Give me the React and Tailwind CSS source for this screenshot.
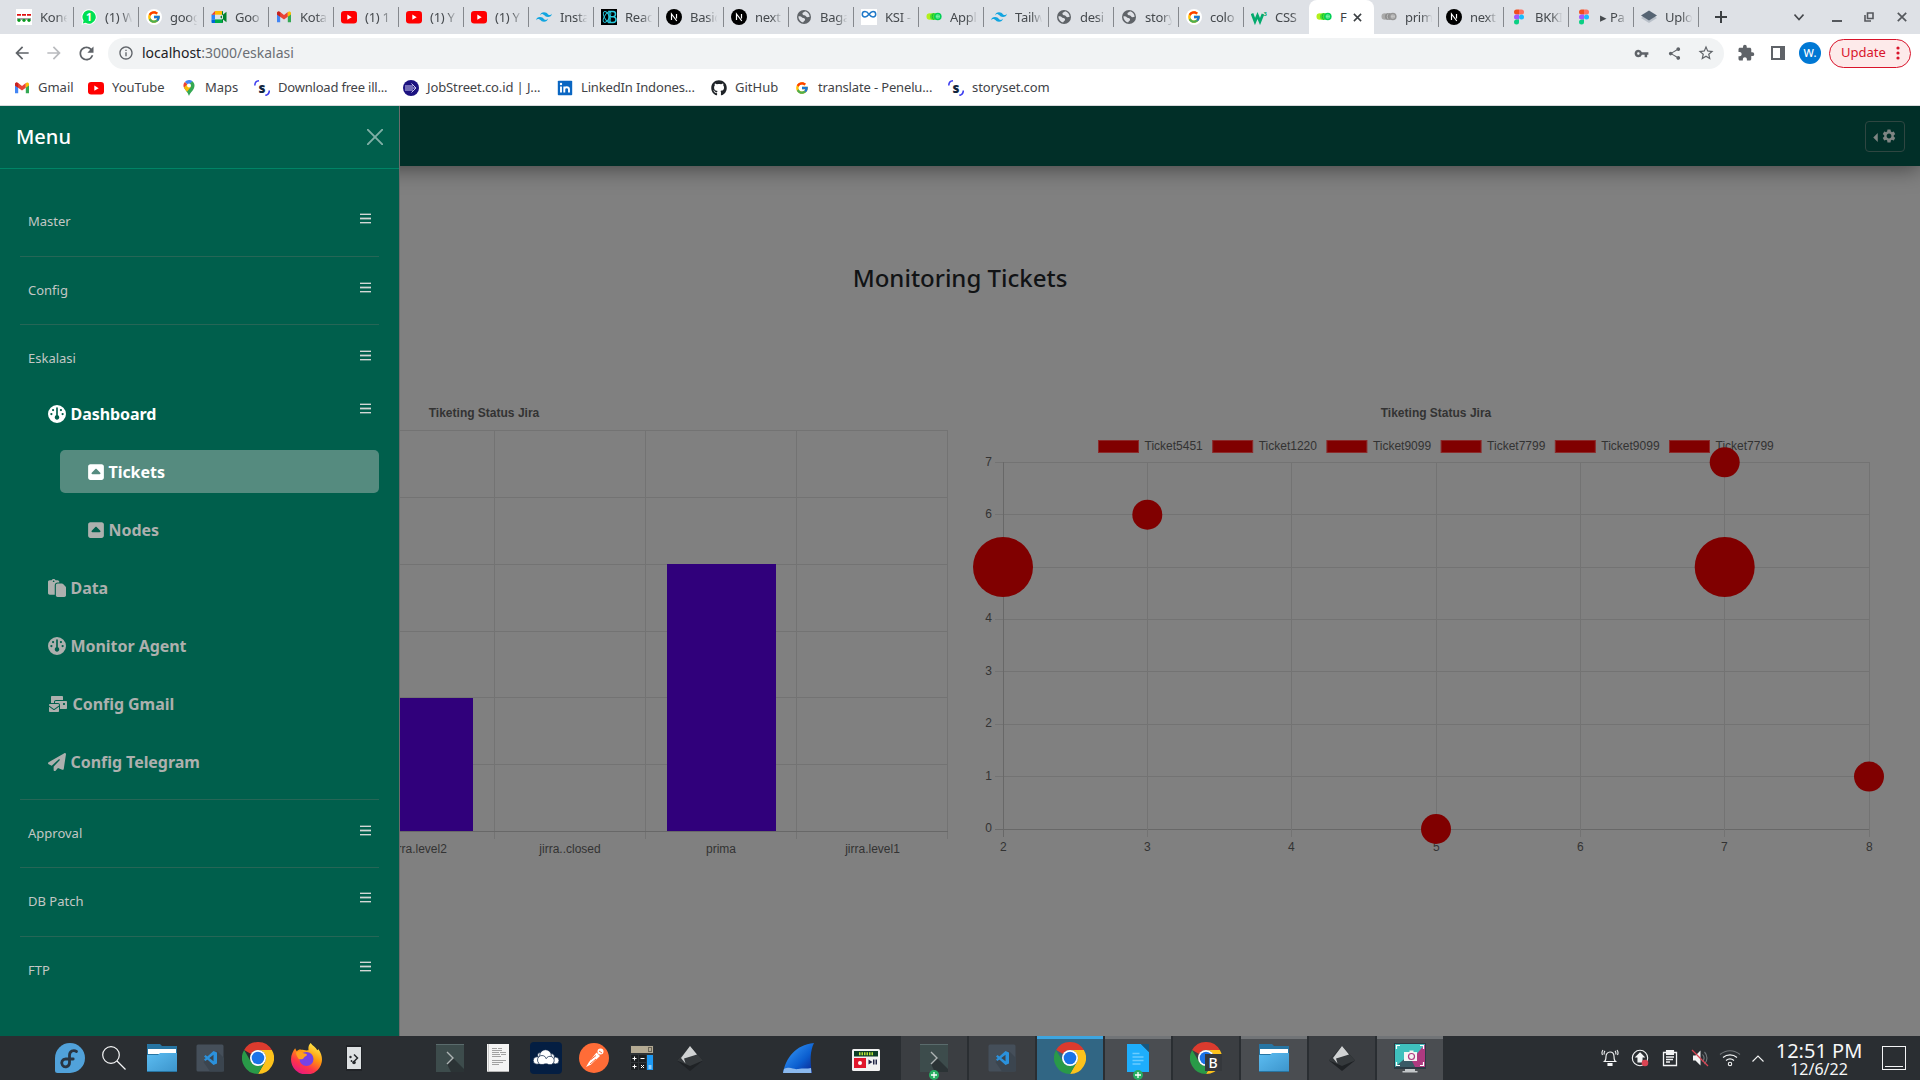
import React from "react";
import { FaGauge, FaSquareCaretUp, FaPaste, FaPaperPlane, FaEnvelopesBulk } from "react-icons/fa6";
import { FaGithub } from "react-icons/fa";
import { MdVpnKey, MdShare, MdStarBorder, MdExtension, MdRefresh, MdArrowBack, MdArrowForward, MdInfoOutline, MdSettings } from "react-icons/md";
import { SiTailwindcss } from "react-icons/si";
import { FcGoogle } from "react-icons/fc";

/* ---------- favicons ---------- */

const YouTube = () => (
  <svg viewBox="0 0 16 16" className="size-4">
    <rect x="0" y="2" width="16" height="12.5" rx="3.2" fill="#f00" />
    <path d="M6.3 5.6v5.2l4.4-2.6z" fill="#fff" />
  </svg>
);

const Gmail = () => (
  <svg viewBox="0 0 16 16" className="size-4">
    <path d="M1 4v9.2h3.2V7.6z" fill="#4285f4" />
    <path d="M15 4v9.2h-3.2V7.6z" fill="#34a853" />
    <path d="M1 4.2C1 2.4 3 2 4.2 3L8 5.9 11.800 3v4.700L8 10.500 1 5.400z" fill="#ea4335" />
    <path d="M11.800 3C13 2 15 2.400 15 4.200v1.300l-3.200 2.300z" fill="#fbbc04" />
    <path d="M1 4.200v1.300l3.200 2.300V3C3 2 1 2.400 1 4.200z" fill="#c5221f" />
  </svg>
);

const Google = () => (
  <span className="flex size-4 items-center justify-center rounded-full bg-white">
    <FcGoogle className="size-3.5" />
  </span>
);

const Globe = () => (
  <svg viewBox="0 0 16 16" className="size-4">
    <circle cx="8" cy="8" r="7" fill="#5f6368" />
    <path d="M9 2.200c-1 1.300-3 1-2.400 3 .5 1.400 3 .6 3.600 2.400.3 1 2.300.6 3.500.2-.2-2.700-2-4.900-4.700-5.600zM2.300 7.500c.2 3 2 5.200 4.800 6 .3-1.400 2-1.500 2-3C9 8.800 6.500 9.300 5.600 8 5 7.200 3.500 7.300 2.300 7.500z" fill="#dfe1e6" />
  </svg>
);

const Next = () => (
  <svg viewBox="0 0 16 16" className="size-4">
    <circle cx="8" cy="8" r="8" fill="#000" />
    <path d="M5.500 11V5l5.300 7M10.500 5v4.500" fill="none" stroke="#fff" strokeWidth="1.200" />
  </svg>
);

const Figma = () => (
  <svg viewBox="0 0 16 16" className="size-4">
    <path d="M8 .5H5.500a2.500 2.500 0 0 0 0 5H8z" fill="#f24e1e" />
    <path d="M8 .5h2.500a2.500 2.500 0 0 1 0 5H8z" fill="#ff7262" />
    <path d="M8 5.500H5.500a2.500 2.500 0 0 0 0 5H8z" fill="#a259ff" />
    <circle cx="10.500" cy="8" r="2.500" fill="#1abcfe" />
    <path d="M8 10.500H5.500A2.500 2.500 0 1 0 8 13z" fill="#0acf83" />
  </svg>
);

const Tailwind = () => <SiTailwindcss className="size-4 text-[#12a5e0]" />;

const Rings = ({ gray }) => (
  <svg viewBox="0 0 16 16" className="size-4">
    <circle cx="3.800" cy="7.500" r="3.300" fill={gray ? "#a9a9a9" : "#b2f01c"} />
    <circle cx="7.600" cy="7.500" r="3.600" fill={gray ? "#8c8c8c" : "#4fe02a"} />
    <circle cx="11.800" cy="7.500" r="3.800" fill={gray ? "#959595" : "#00cf55"} />
    <path d="M9.800 7.500h4M11.800 5.500v4M10.300 6h3v3h-3z" fill="none" stroke={gray ? "#cdcdcd" : "#8af5ae"} strokeWidth=".7" />
    <path d="M7.600 4.500a4 4 0 0 0 0 6" fill="none" stroke={gray ? "#c5c5c5" : "#0fae3c"} strokeWidth=".8" />
  </svg>
);

const Storyset = () => (
  <svg viewBox="0 0 16 16" className="size-4">
    <path d="M.8 5.500C.8 3 2.500 1 5 .8M15.300 10.500c0 2.500-1.500 4.500-4 4.900" fill="none" stroke="#3d3df0" strokeWidth="1.600" />
    <text x="8" y="12.500" textAnchor="middle" fontFamily="Noto Sans" fontWeight="900" fontSize="13.500" fill="#12263f">s</text>
  </svg>
);

const Kon = () => (
  <svg viewBox="0 0 16 16" className="size-4">
    <rect width="16" height="16" fill="#fff" />
    <path d="M1 5.800h4M6 5.800h4M11 5.800h4" stroke="#e01010" strokeWidth="1.800" />
    <path d="M1 10h14" stroke="#111" strokeWidth=".8" />
    <g fill="#0a9a20">
      <circle cx="3" cy="11.300" r="1.600" />
      <circle cx="8" cy="11.300" r="1.600" />
      <circle cx="13" cy="11.300" r="1.600" />
    </g>
  </svg>
);

const WhatsApp = () => (
  <svg viewBox="0 0 16 16" className="size-4">
    <path d="M8 .3a7.700 7.700 0 1 1-3.600 14.500L.5 15.800l1-3.800A7.700 7.700 0 0 1 8 .3z" fill="#fff" />
    <path d="M8 1.300a6.700 6.700 0 1 1-3.300 12.500l-2.900.8.8-2.900A6.700 6.700 0 0 1 8 1.300z" fill="#00e052" />
    <text x="8" y="12" textAnchor="middle" fontFamily="Noto Sans" fontWeight="700" fontSize="10.500" fill="#fff">1</text>
  </svg>
);

const Meet = () => (
  <svg viewBox="0 0 16 16" className="size-4">
    <path d="M.5 5.500v5H4v-5z" fill="#2684fc" />
    <path d="M.5 5.700 4 2v3.700z" fill="#ea4335" />
    <path d="M4 2h7v3.700H4z" fill="#ffba00" />
    <path d="M.5 10.400V13c0 .6.400 1 1 1H4v-3.600z" fill="#0066da" />
    <path d="M4 10.400h7V14H4z" fill="#00ac47" />
    <path d="M11 2v12c.6 0 1-.4 1-1V3c0-.6-.4-1-1-1zM9 8l6.500-5.300v10.600z" fill="#00832d" />
  </svg>
);

const ReactB = () => (
  <svg viewBox="0 0 16 16" className="size-4">
    <rect width="16" height="16" fill="#000" />
    <g fill="none" stroke="#28c9dd" strokeWidth=".9">
      <ellipse cx="6" cy="8" rx="6" ry="2.500" transform="rotate(60 6 8)" />
      <ellipse cx="6" cy="8" rx="6" ry="2.500" transform="rotate(-60 6 8)" />
      <path d="M8 2.500h4q2.500 0 2.500 2.500T12 7.700H8zm0 5.200h4.500q2.500.3 2.500 3t-3 2.800H8z" strokeWidth="1.500" />
    </g>
  </svg>
);

const Ksi = () => (
  <svg viewBox="0 0 16 16" className="size-4">
    <rect width="16" height="16" fill="#fff" />
    <path d="M8 5.300C6.500 3 5.500 2.500 4 2.500a2.700 2.700 0 0 0 0 5.400c1.500 0 2.500-.6 4-2.600s2.500-2.800 4-2.800a2.700 2.700 0 0 1 0 5.400c-1.500 0-2.500-.6-4-2.600z" fill="none" stroke="#1f78c8" strokeWidth="1.500" />
  </svg>
);

const W3 = () => (
  <svg viewBox="0 0 16 16" className="size-4">
    <path d="M1 4.500 4 12.500 6.500 6.500 9 12.500 12 5" fill="none" stroke="#04aa6d" strokeWidth="2.700" />
    <text x="12.500" y="6.500" fontFamily="Noto Sans" fontWeight="700" fontSize="6" fill="#04aa6d">3</text>
  </svg>
);

const Layers = () => (
  <svg viewBox="0 0 16 16" className="size-4">
    <path d="M0 9 8 4l8 5-8 5z" fill="#b9c0c9" />
    <path d="M0 6.500 8 1.500l8 5-8 5z" fill="#566473" />
  </svg>
);

const MapsPin = () => (
  <svg viewBox="0 0 16 16" className="size-4">
    <path d="M8 0a5.500 5.500 0 0 0-4.200 1.900L8 5.500 11.500 1.200A5.500 5.500 0 0 0 8 0z" fill="#4285f4" />
    <path d="M3.800 1.900A5.500 5.500 0 0 0 3.300 8.300L6.500 4.200z" fill="#ea4335" />
    <path d="M3.300 8.300 9.800 6.300 6.500 4.200 3 7.600z" fill="#fbbc04" />
    <path d="M3.300 8.300C4.500 10.500 6.500 12 8 16c1.500-4 5.500-6 5.500-10.500 0-1.700-.8-3.200-2-4.300z" fill="#34a853" />
    <path d="M3.300 8.300c.8 1.300 1.800 2.300 2.700 3.500l4-5-3.500-2.600z" fill="#fbbc04" />
    <circle cx="8" cy="5.500" r="2" fill="#fff" />
  </svg>
);

const JobStreet = () => (
  <svg viewBox="0 0 16 16" className="size-4">
    <circle cx="8" cy="8" r="8" fill="#1c1280" />
    <path d="M2 6h8M2 8h11M2 10h8M8.500 3.500 13 8l-4.500 4.500" fill="none" stroke="#c9c5ee" strokeWidth="1" />
  </svg>
);

const LinkedIn = () => (
  <svg viewBox="0 0 16 16" className="size-4">
    <rect x=".8" y=".8" width="14.400" height="14.400" rx=".8" fill="#0a66c2" />
    <path d="M4 6.500v6M7.300 12.500v-6M7.300 9.500c0-3 4.700-3 4.700 0v3" fill="none" stroke="#fff" strokeWidth="1.900" />
    <circle cx="4" cy="4" r="1.200" fill="#fff" />
  </svg>
);

const tabs = [
  [Kon, "Kone"], [WhatsApp, "(1) W"], [Google, "goog"], [Meet, "Goo"], [Gmail, "Kota"],
  [YouTube, "(1) 1"], [YouTube, "(1) Y"], [YouTube, "(1) Y"], [Tailwind, "Insta"], [ReactB, "Reac"],
  [Next, "Basic"], [Next, "next"], [Globe, "Baga"], [Ksi, "KSI -"], [Rings, "Appl"],
  [Tailwind, "Tailw"], [Globe, "desi"], [Globe, "story"], [Google, "colo"], [W3, "CSS"],
  [Rings, "F"], [() => <Rings gray />, "prim"], [Next, "next"], [Figma, "BKKI"], [Figma, "▸ Pa"], [Layers, "Uplo"],
];

const ACTIVE = 20;

function Tab({ icon: Icon, label, active, divider }) {
  if (active) {
    return (
      <div className="flex h-[34px] w-[65px] shrink-0 items-center rounded-t-lg bg-white pl-[7px]">
        <Icon />
        <span className="ml-2 w-[8px] overflow-hidden text-[#3c4043]">{label}</span>
        <svg viewBox="0 0 10 10" className="ml-[5px] size-[9px]">
          <path d="M1 1l8 8M9 1l-8 8" stroke="#3c4043" strokeWidth="1.700" />
        </svg>
      </div>
    );
  }
  return (
    <div className="flex h-[34px] w-[65px] shrink-0 items-center pl-[7px]">
      <Icon />
      <span className="ml-2 w-[28px] overflow-hidden whitespace-nowrap text-[#45494d] [mask-image:linear-gradient(to_right,black_58%,transparent_98%)]">{label}</span>
      <span className={divider ? "ml-auto h-5 w-px bg-[#85888d]" : "hidden"} />
    </div>
  );
}

function TabStrip() {
  return (
    <div className="flex h-[34px] shrink-0 items-center bg-[#dee1e6] pl-[9px] text-[13px] leading-[18px] tracking-[-0.25px]">
      {tabs.map(([icon, label], i) => (
        <Tab key={i} icon={icon} label={label} active={i === ACTIVE} divider={i !== ACTIVE - 1} />
      ))}
      <svg viewBox="0 0 12 12" className="ml-[16px] size-3">
        <path d="M6 0v12M0 6h12" stroke="#3c4043" strokeWidth="2" />
      </svg>
      <div className="ml-auto flex items-center pr-[13px]">
        <svg viewBox="0 0 10 10" className="mr-[28px] size-[10px]"><path d="M.5 2.500 5 7.500l4.500-5" fill="none" stroke="#44474b" strokeWidth="1.600" /></svg>
        <svg viewBox="0 0 10 10" className="mr-[22px] size-[10px]"><path d="M0 9h10" stroke="#55585d" strokeWidth="2" /></svg>
        <svg viewBox="0 0 10 10" className="mr-[23px] size-[10px]"><path d="M3.500 1h5.500v5.500H3.500zM1 3v6h6" fill="none" stroke="#55585d" strokeWidth="1.600" /></svg>
        <svg viewBox="0 0 10 10" className="size-[10px]"><path d="M.8.8l8.400 8.400M9.200.8.8 9.200" stroke="#55585d" strokeWidth="1.700" /></svg>
      </div>
    </div>
  );
}

function Toolbar() {
  return (
    <div className="flex h-[38px] shrink-0 items-center bg-white text-[#5f6368]">
      <MdArrowBack className="ml-[12px] size-5" />
      <MdArrowForward className="ml-[12px] size-5 text-[#b9bbbe]" />
      <MdRefresh className="ml-[12px] size-[21px]" />
      <div className="ml-[11px] flex h-[31px] w-[1616px] items-center rounded-full bg-[#f1f3f4] pl-2.5 pr-[9px]">
        <MdInfoOutline className="size-4" />
        <span className="ml-2 text-[14px] leading-5 text-[#6b6f74]"><span className="text-[#202124]">localhost</span>:3000/eskalasi</span>
        <MdVpnKey className="ml-auto size-[15px]" />
        <MdShare className="ml-[18px] size-[15px]" />
        <MdStarBorder className="ml-[15px] size-[18px]" />
      </div>
      <MdExtension className="ml-[13px] size-[18px]" />
      <svg viewBox="0 0 14 14" className="ml-[16px] size-[14px]">
        <path d="M1 1h12v12H1z" fill="none" stroke="#5f6368" strokeWidth="2" />
        <path d="M9 1h4v12H9z" fill="#5f6368" />
      </svg>
      <span className="ml-[14px] flex size-[22px] items-center justify-center rounded-full bg-[#0078d4] text-[11px] font-medium text-white">W.</span>
      <div className="ml-[8px] flex h-[29px] w-[82px] items-center rounded-full border border-[#d9142b] bg-[#fdeaea] pl-[11px] text-[13px] text-[#d9142b]">
        Update
        <svg viewBox="0 0 4 14" className="ml-auto mr-[10px] h-[14px] w-1">
          <g fill="#d9142b"><circle cx="2" cy="2" r="1.600" /><circle cx="2" cy="7" r="1.600" /><circle cx="2" cy="12" r="1.600" /></g>
        </svg>
      </div>
    </div>
  );
}

const bookmarks = [
  [Gmail, "Gmail", "w-[74px]"],
  [YouTube, "YouTube", "w-[93px]"],
  [MapsPin, "Maps", "w-[73px]"],
  [Storyset, "Download free ill...", "w-[149px] tracking-[-0.2px]"],
  [JobStreet, "JobStreet.co.id | J...", "w-[154px] tracking-[-0.12px]"],
  [LinkedIn, "LinkedIn Indones...", "w-[154px] tracking-[-0.15px]"],
  [() => <FaGithub className="size-4 text-[#1f2328]" />, "GitHub", "w-[83px]"],
  [Google, "translate - Penelu...", "w-[154px] tracking-[-0.15px]"],
  [Storyset, "storyset.com", "w-[110px] tracking-[-0.1px]"],
];

function Bookmarks() {
  return (
    <div className="flex h-[34px] shrink-0 items-center border-b border-[#d9dadc] bg-white pb-px pl-[14px] text-[13px] text-[#3f4347]">
      {bookmarks.map(([Icon, label, width]) => (
        <div key={label} className={`flex shrink-0 items-center gap-2 whitespace-nowrap ${width}`}>
          <span className="shrink-0"><Icon /></span>
          {label}
        </div>
      ))}
    </div>
  );
}

/* ---------- charts ---------- */

const GRID = "#737373";
const ZERO = "#686868";

function BarChart() {
  const rows = [430, 497, 564, 631, 697, 764];
  const cols = [192, 343, 494, 645, 796, 947];
  const labels = [["jirra.level2", 419.5], ["jirra..closed", 570], ["prima", 721], ["jirra.level1", 872.5]];
  return (
    <svg viewBox="0 390 960 480" className="h-[480px] w-full" fontFamily="Liberation Sans" fontSize="12" fill="#333" textAnchor="middle">
      <text x="484" y="417" fontWeight="700">Tiketing Status Jira</text>
      {rows.map((y) => <rect key={y} x="41" y={y} width="907" height="1" fill={GRID} />)}
      {cols.map((x) => <rect key={x} x={x} y="430" width="1" height="409" fill={GRID} />)}
      <rect x="41" y="831" width="907" height="1" fill={ZERO} />
      <rect x="364" y="698" width="109" height="133" fill="#30007b" />
      <rect x="667" y="564" width="109" height="267" fill="#30007b" />
      {labels.map(([t, x]) => <text key={t} x={x} y="853">{t}</text>)}
    </svg>
  );
}

function BubbleChart() {
  const xs = [1003, 1147, 1291, 1436, 1580, 1724, 1869];
  const ys = [829, 776, 724, 671, 619, 567, 514, 462];
  const baselines = [832, 780, 727, 675, 622, 571, 518, 466];
  const legend = ["Ticket5451", "Ticket1220", "Ticket9099", "Ticket7799", "Ticket9099", "Ticket7799"];
  const bubbles = [[1003, 567, 30], [1147.3, 514.7, 15], [1436, 829, 15], [1724.7, 567, 30], [1724.7, 462.300, 15], [1869, 776.600, 15]];
  return (
    <svg viewBox="960 390 960 480" className="h-[480px] w-full" fontFamily="Liberation Sans" fontSize="12" fill="#333">
      <text x="1436" y="417" fontWeight="700" textAnchor="middle">Tiketing Status Jira</text>
      {legend.map((t, i) => (
        <g key={i}>
          <rect x={1098.500 + i * 114.200} y="440.500" width="40" height="12" fill="#800000" stroke="#8b2a2a" />
          <text x={1144.500 + i * 114.200} y="450">{t}</text>
        </g>
      ))}
      {ys.map((y, i) => (
        <g key={y}>
          <rect x="995" y={y} width="875" height="1" fill={i ? GRID : ZERO} />
          {i !== 5 && <text x="992" y={baselines[i]} textAnchor="end">{i}</text>}
        </g>
      ))}
      {xs.map((x, i) => (
        <g key={x}>
          <rect x={x} y="462" width="1" height="375" fill={i ? GRID : ZERO} />
          <text x={x + 0.3} y="851" textAnchor="middle">{i + 2}</text>
        </g>
      ))}
      {bubbles.map(([x, y, r], i) => <circle key={i} cx={x} cy={y} r={r} fill="#800000" />)}
    </svg>
  );
}

/* ---------- side menu ---------- */

const Bars = () => (
  <svg viewBox="0 0 11 12" className="h-[12px] w-[11px]" shapeRendering="crispEdges">
    <path d="M0 1.500h11M0 5.500h11M0 9.500h11" stroke="#d3d8d6" />
    <path d="M0 .5h11M0 4.500h11M0 6.500h11M0 10.500h11" stroke="#c9cfcd" strokeOpacity=".4" />
  </svg>
);

function Section({ label, className = "", lift = "-mt-[6px]" }) {
  return (
    <div className={`flex shrink-0 items-center pl-2 pr-[8px] text-[13px] text-[#c3c7c5] ${className}`}>
      {label}
      <span className={`ml-auto ${lift}`}><Bars /></span>
    </div>
  );
}

function Item({ icon: Icon, label, iconClass, className }) {
  return (
    <div className={`flex h-[43px] shrink-0 items-center gap-[4.5px] text-[16px] font-bold tracking-[-0.05px] ${className}`}>
      <Icon className={`shrink-0 ${iconClass}`} />
      {label}
    </div>
  );
}

/* Caret glyph box: 18px tall with 16px of ink, so the label sits right after the ink. */
const CARET = "-mr-px ml-[-1px] size-[18px]";

function Sidebar() {
  return (
    <aside className="absolute inset-y-0 left-0 flex w-[400px] flex-col border-r border-[#6b6b6b] bg-[#005f4c]">
      <div className="flex h-[63px] shrink-0 items-center justify-between border-b border-[#008466] pl-4 pr-[16px] text-[20px] font-medium text-white">
        Menu
        <svg viewBox="0 0 16 16" className="size-4 opacity-50"><path d="M.7.7l14.600 14.600M15.300.7.7 15.300" stroke="#fff" strokeWidth="1.900" strokeLinecap="round" /></svg>
      </div>
      <div className="flex flex-col px-5 pt-[18px]">
        <Section label="Master" className="h-[70px] border-b border-[#266656]" />
        <Section label="Config" className="h-[68px] border-b border-[#266656]" />
        <Section label="Eskalasi" className="h-[67px]" />
        <div className="flex items-center pr-[8px]">
          <Item icon={FaGauge} label="Dashboard" iconClass="size-[18px]" className="pl-7 text-white" />
          <span className="ml-auto -mt-[10px]"><Bars /></span>
        </div>
        <div className="mt-[15px] flex flex-col gap-[15px] text-[#adb0ae]">
          <Item icon={FaSquareCaretUp} label="Tickets" iconClass={CARET} className="ml-10 rounded-[5px] bg-[#558b7f] pl-[28px] text-white" />
          <Item icon={FaSquareCaretUp} label="Nodes" iconClass={CARET} className="ml-10 pl-[28px]" />
          <Item icon={FaPaste} label="Data" iconClass="size-[18px]" className="pl-7" />
          <Item icon={FaGauge} label="Monitor Agent" iconClass="size-[18px]" className="pl-7" />
          <Item icon={FaEnvelopesBulk} label="Config Gmail" iconClass="h-[18px] w-[20px]" className="pl-7" />
          <Item icon={FaPaperPlane} label="Config Telegram" iconClass="size-[18px]" className="pl-7" />
        </div>
        <div className="mt-[16px] border-b border-[#266656]" />
        <Section label="Approval" className="h-[68px] border-b border-[#266656]" />
        <Section label="DB Patch" className="h-[69px] border-b border-[#266656]" lift="-mt-[8px]" />
        <Section label="FTP" className="h-[68px]" lift="-mt-[8px]" />
      </div>
    </aside>
  );
}

function Page() {
  return (
    <div className="relative flex min-h-0 flex-1 flex-col overflow-hidden bg-[#808080]">
      <header className="flex h-[60px] shrink-0 items-center justify-end bg-[#012f28] pr-[15px] shadow-[0_2px_22px_rgba(0,0,0,0.5)]">
        <div className="flex h-[31px] w-[40px] items-center justify-center rounded border border-[#2f4641] text-[#7f8583]">
          <svg viewBox="0 0 4 8" className="mt-[3px] h-[9px] w-[5px]"><path d="M4 0v8L0 4z" fill="currentColor" /></svg>
          <MdSettings className="ml-[3px] size-4" />
        </div>
      </header>
      <h1 className="mt-[94px] h-9 text-center text-[24px] font-medium leading-9 text-[#111315]">Monitoring Tickets</h1>
      <div className="mt-[94px] grid grid-cols-2">
        <BarChart />
        <BubbleChart />
      </div>
      <Sidebar />
    </div>
  );
}

/* ---------- desktop panel ---------- */

const Fedora = () => (
  <svg viewBox="0 0 30 30" className="size-[30px]">
    <path d="M15 0a15 15 0 0 1 0 30H2.500A2.500 2.500 0 0 1 0 27.500V15A15 15 0 0 1 15 0z" fill="#51a2da" />
    <path d="M21.500 8.500c-3-2-7-.3-7 3.800v7.200c0 4.500-5 5.500-7 2.700-2-3 0-6.200 3.200-6.200h7.500" fill="none" stroke="#293440" strokeWidth="2.800" strokeLinecap="round" />
  </svg>
);

const Search = () => (
  <svg viewBox="0 0 24 24" className="size-6" fill="none" stroke="#f5f6f7" strokeWidth="1.200">
    <circle cx="9" cy="9" r="8.300" /><path d="M15 15l8.500 8.500" />
  </svg>
);

const Folder = () => (
  <svg viewBox="0 0 30 28" className="h-7 w-[30px]">
    <defs><linearGradient id="fold" x1="0" y1="0" x2="1" y2="1"><stop offset="0" stopColor="#5cbdf2" /><stop offset="1" stopColor="#3c94cb" /></linearGradient></defs>
    <path d="M0 0h13l2 2h15v14H0z" fill="#2775a3" />
    <path d="M1 5h28v5H1z" fill="#fff" />
    <path d="M0 11h11l2-2h17v19H0z" fill="url(#fold)" />
    <path d="M0 27.500h30" stroke="#2775a3" />
  </svg>
);

const VsCode = () => (
  <svg viewBox="0 0 28 28" className="size-7">
    <rect x=".5" y=".5" width="27" height="27" rx="1.500" fill="#454f5a" />
    <path d="M21 7l7 7v13.500H14L7.500 18z" fill="#3b454f" />
    <path d="M17.500 7 21 8.500v11L17.500 21 8 12.500 9.500 11l8 6.200v-6.400l-8 6.200L8 15.500z" fill="#2b91dc" />
  </svg>
);

const Chrome = ({ beta }) => (
  <svg viewBox="0 0 32 32" className="size-8">
    <path d="M2.140 8A16 16 0 0 1 29.860 8H16a8 8 0 0 0-6.930 4z" fill="#dc3b2e" />
    <path d="M29.860 8A16 16 0 0 1 16 32l6.930-12A8 8 0 0 0 16 8z" fill="#fcc21b" />
    <path d="M2.140 8 9.070 20A8 8 0 0 0 22.930 20L16 32A16 16 0 0 1 2.140 8z" fill="#299a48" />
    <circle cx="16" cy="16" r="8" fill="#fff" />
    <circle cx="16" cy="16" r="6.300" fill="#1a73e8" />
    {beta && <rect x="15" y="12" width="17" height="17" fill="#35383c" />}
    {beta && <text x="23" y="25.500" textAnchor="middle" fontFamily="Noto Sans" fontSize="14" fontWeight="500" fill="#fff">B</text>}
  </svg>
);

const Firefox = () => (
  <svg viewBox="0 0 30 30" className="size-[31px]">
    <defs>
      <linearGradient id="fx" x1=".8" y1="0" x2=".25" y2="1"><stop offset="0" stopColor="#fff44f" /><stop offset=".4" stopColor="#ff980e" /><stop offset=".7" stopColor="#ff3647" /><stop offset="1" stopColor="#e31587" /></linearGradient>
    </defs>
    <path d="M19 0c2 3 5 4 6.500 7 1-.3.700-1 .700-1.500C29 9 30 12.500 30 16A15 14.500 0 0 1 0 16C0 11 2 8 4 5l1.500 3C7 6.500 8.500 6 10 6.500c2 0 4 1 7 .5-.5-2.500 0-5 2-7z" fill="url(#fx)" />
    <circle cx="15" cy="15.500" r="6.800" fill="#7542e5" />
    <path d="M5 9c3-2 5-1 7 1 2 .5 3.500.5 3.500 1.500-1 1.500-3 1.500-3.500 3.500-1.500 1-3 1-4.500.5C6 13.500 4.500 11 5 9z" fill="#ffa11f" />
  </svg>
);

const UsbCard = () => (
  <svg viewBox="0 0 16 28" className="h-7 w-4">
    <path d="M0 1h16v26H0z" fill="#202327" />
    <path d="M1 3h14v22H1z" fill="#dde1e3" />
    <g fill="#25292d"><circle cx="8" cy="18.500" r="1.800" /><circle cx="4.500" cy="13" r="1.200" /><circle cx="5.500" cy="17" r=".9" /><path d="M8 10.500 11.500 14 8 17.500" fill="none" stroke="#25292d" strokeWidth="1.500" /></g>
  </svg>
);

const Konsole = () => (
  <svg viewBox="0 0 28 28" className="size-7">
    <path d="M0 0h28v28H0z" fill="#3d4c4c" /><path d="M17 14l11 11v3H15L11 20z" fill="#2b3335" />
    <path d="M0 .5h28" stroke="#5a6b6c" />
    <path d="M11 8l6 6-6 6" fill="none" stroke="#aeb4b4" strokeWidth="1.400" />
  </svg>
);

const Doc = () => (
  <svg viewBox="0 0 22 28" className="h-7 w-[22px]">
    <path d="M0 0h22v28H0z" fill="#f4f4f4" /><path d="M1.500 0v28" stroke="#c9c9c9" /><path d="M0 27.500h22" stroke="#b5b5b5" />
    <path d="M5 4.500h5m1 0h4M5 6.500h10M5 8.500h7m1 0h6M5 10.500h8m1 0h5M5 12.500h9M5 16.500h14M5 18.500h11M5 20.500h7" stroke="#999" strokeWidth=".9" />
  </svg>
);

const OwnCloud = () => (
  <svg viewBox="0 0 32 32" className="size-8">
    <rect width="32" height="32" rx="4" fill="#041e42" />
    <g fill="#fff" stroke="#041e42" strokeWidth=".7"><circle cx="7" cy="18.500" r="3.800" /><circle cx="10" cy="13" r="2.500" /><circle cx="25.500" cy="18.500" r="3.500" /><circle cx="21" cy="15" r="3.500" /><circle cx="15.500" cy="13.500" r="5.800" /><circle cx="12" cy="18" r="4.500" /><circle cx="20" cy="18.500" r="4.200" /></g>
    <path d="M9 17h13v4.500H9z" fill="#fff" />
  </svg>
);

const Postman = () => (
  <svg viewBox="0 0 30 30" className="size-[30px]">
    <circle cx="15" cy="15" r="15" fill="#ff6c37" />
    <circle cx="21.500" cy="8.500" r="3" fill="#fff" />
    <path d="M17.500 9.500 21 13 12 21.500 7 24l3-5z" fill="#fff" />
    <path d="M20 8l3 2M12 16.500l5-4M11 21l6-5" stroke="#ff6c37" strokeWidth="1" />
  </svg>
);

const Calculator = () => (
  <svg viewBox="0 0 24 26" className="h-[26px] w-6">
    <path d="M0 0h24v25H0z" fill="#2f3336" />
    <path d="M1 1h22v7H1z" fill="#b4aa93" /><rect x="18.500" y="2.500" width="3" height="4" fill="none" stroke="#6b6557" />
    <path d="M1 10h7v7H1zM9 10h7v7H9zM1 18h7v7H1zM9 18h7v7H9z" fill="#1c1f21" />
    <path d="M17 10h6v15h-6z" fill="#1d99f3" />
    <path d="M2.500 13.500h4M4.500 11.500v4M10.500 13.500h4M2.500 21.500h4M4.500 19.500v4M11 20l3 3M14 20l-3 3M18.500 21h3M18.500 23h3" stroke="#fff" strokeWidth="1" />
  </svg>
);

const Inkscape = () => (
  <svg viewBox="0 0 26 26" className="size-[26px]">
    <path d="M13 1 26 15.500 13 26 0 15.500z" fill="#1f2225" />
    <path d="M13 1 26 15.500 13 21 0 15.500z" fill="#35393c" />
    <path d="M13 1 20 9.500 12 12l-5 1.500 1.500 5L4 13z" fill="#d0d2d3" />
  </svg>
);

const Shark = () => (
  <svg viewBox="0 0 31 30" className="h-[30px] w-[31px]">
    <defs><linearGradient id="fin" x1="0" y1="0" x2="1" y2="1"><stop offset="0" stopColor="#3fa4ff" /><stop offset=".6" stopColor="#0c5fd0" /><stop offset="1" stopColor="#0a1f8a" /></linearGradient></defs>
    <path d="M31 0C27 8 27 18 29 30H0C3 15 12 2 31 0z" fill="url(#fin)" />
    <path d="M1 26c7-3 9 1 14 0s9 0 13-1l.5 5H0z" fill="#8bb9ee" />
  </svg>
);

const Recorder = () => (
  <svg viewBox="0 0 28 22" className="mt-1 h-[22px] w-7">
    <rect width="28" height="22" rx="1.500" fill="#f2f2f2" />
    <path d="M2 2h24v5.500H2z" fill="#0c3d25" /><path d="M7 4.700h14" stroke="#b6e234" strokeWidth="3" strokeDasharray="1.500 1" />
    <path d="M2 9h12v10H2z" fill="#e0162b" /><circle cx="8" cy="14" r="2" fill="#fff" />
    <path d="M16.500 10.500l4 2.500-4 2.500zM21 10.500h1.500v5H21zM23.500 10.500H25v5h-1.500z" fill="#222647" />
  </svg>
);

const BlueDoc = () => (
  <svg viewBox="0 0 22 28" className="h-7 w-[22px]">
    <path d="M0 0h14l8 8v20H0z" fill="#1eaefc" /><path d="M14 0h8v8z" fill="#17577e" />
    <path d="M5.500 9.500h7M5.500 13h11M5.500 16.500h11M5.500 20h8" stroke="#6accff" strokeWidth="1.300" />
  </svg>
);

const Screenshot = () => (
  <svg viewBox="0 0 32 30" className="h-[30px] w-8">
    <path d="M0 0h32v26H0z" fill="#2c3a44" /><path d="M1 1h30v23H1z" fill="#3fc0bd" /><path d="M31 1v23H12z" fill="#ae3a80" /><path d="M1 24 15 12l6 12z" fill="#3a5a66" />
    <path d="M2.500 6V2.500H6M26 2.500h3.500V6M2.500 19v3.500H6M26 22.500h3.500V19" fill="none" stroke="#fff" strokeWidth="1.200" />
    <rect x="10" y="9" width="13" height="9" fill="#f4f4f4" /><circle cx="17.500" cy="13.500" r="3" fill="none" stroke="#ae3a80" strokeWidth="1.200" /><path d="M15.500 7.500h4V9h-4z" fill="#f4f4f4" />
    <path d="M11 26h10v2H11zM8.500 28h15v1.500h-15z" fill="#c4c7c9" />
  </svg>
);

const launchers = [
  Search, Folder, VsCode, Chrome, Firefox, UsbCard, null, Konsole, Doc, OwnCloud, Postman, Calculator, Inkscape,
];

const tasks = [
  [Konsole, "bg-[#3b3e42] border-[#3b3e42]", true],
  [VsCode, "bg-[#3b3e42] border-[#3b3e42]", false],
  [Chrome, "bg-[#316684] border-[#3da5e0]", false],
  [BlueDoc, "bg-[#4a4d51] border-[#717477]", true],
  [() => <Chrome beta />, "bg-[#3b3e42] border-[#3b3e42]", false],
  [Folder, "bg-[#4a4d51] border-[#717477]", false],
  [Inkscape, "bg-[#3b3e42] border-[#3b3e42]", false],
  [Screenshot, "bg-[#4a4d51] border-[#717477]", false],
];

const Badge = () => (
  <svg viewBox="0 0 10 10" className="absolute bottom-0 left-[28px] size-[10px]">
    <circle cx="5" cy="5" r="5" fill="#27ae60" /><path d="M5 2v6M2 5h6" stroke="#fff" strokeWidth="1.300" />
  </svg>
);

function Tray() {
  const s = { fill: "none", stroke: "#f3f4f5", strokeWidth: 1.1 };
  return (
    <div className="flex items-center">
      <svg viewBox="0 0 18 18" className="size-[18px]" {...s}>
        <path d="M3.500 12.500c1.500-1 1.500-3 1.500-5C5 5 6.500 3 9 3s4 2 4 4.500c0 2 0 4 1.500 5zM2 1C.8 2.500.8 4.500 1.500 6M16 1c1.200 1.500 1.200 3.500.5 5M4 2C3 3 3 4.500 3.300 5.500M14 2c1 1 1 2.500.7 3.500" />
        <path d="M7 14.500h4v2H7z" fill="#f3f4f5" />
      </svg>
      <svg viewBox="0 0 18 18" className="ml-3 size-[18px]" {...s}>
        <circle cx="9" cy="9" r="7.700" /><path d="M9 4l4 4h-2v5H7V8H5z" fill="#f3f4f5" /><circle cx="14" cy="14" r="3.300" fill="#da4453" stroke="none" />
      </svg>
      <svg viewBox="0 0 18 18" className="ml-3 size-[18px]" {...s}>
        <path d="M2.500 3.500h13v13h-13zM5 8h8M5 10.500h7M5 13h4" strokeWidth="1.300" /><path d="M5.500 1.500h7v4h-7z" fill="#f3f4f5" />
      </svg>
      <svg viewBox="0 0 18 18" className="ml-3 size-[18px]" {...s}>
        <path d="M2 6.500h2.500L9.500 1.500v15L4.500 11.500H2z" fill="#f3f4f5" stroke="none" />
        <path d="M11.500 5.500c1.800 2 1.800 5 0 7M13.500 3c3.300 3.500 3.300 8.500 0 12" stroke="#767a7e" />
        <path d="M1 1l16 16" stroke="#da4453" strokeWidth="1.300" />
      </svg>
      <svg viewBox="0 0 22 18" className="ml-[10px] h-[18px] w-[22px]" {...s}>
        <path d="M1 5.500C7 .5 15 .5 21 5.500" stroke="#6f7377" /><path d="M4 8.500c4-3.500 10-3.500 14 0M7 11.500c2.500-2 5.500-2 8 0" /><circle cx="11" cy="15" r="1.700" />
      </svg>
      <svg viewBox="0 0 12 7" className="ml-[11px] h-[7px] w-3" {...s}><path d="M.5 6.500 6 1l5.500 5.500" /></svg>
      <div className="ml-[12px] flex w-[86px] flex-col items-center whitespace-nowrap text-[#f6f7f8]">
        <span className="mt-[2px] text-[20px] leading-[20px]">12:51 PM</span>
        <span className="text-[16px] leading-[17px]">12/6/22</span>
      </div>
      <div className="ml-[20px] mr-[14px] flex size-6 items-end justify-center border border-[#f3f4f5] pb-[2px]">
        <span className="h-px w-[18px] bg-[#f3f4f5]" />
      </div>
    </div>
  );
}

function Panel() {
  return (
    <footer className="flex h-[44px] shrink-0 items-center bg-[#2a2e32]">
      <div className="flex pl-[48px]">
        <div className="flex h-[44px] w-[42px] items-center pl-[7px]"><Fedora /></div>
        {launchers.map((Icon, i) => (
          <div key={i} className="flex h-[44px] w-12 items-center justify-center">{Icon && <Icon />}</div>
        ))}
        <div className="ml-[60px] flex h-[44px] w-12 items-center justify-center"><Shark /></div>
        <div className="ml-[20px] flex h-[44px] w-12 items-center justify-center"><Recorder /></div>
      </div>
      <div className="ml-[11px] flex gap-[2px]">
        {tasks.map(([Icon, tone, badge], i) => (
          <div key={i} className={`relative flex h-[44px] w-[66px] items-center justify-center border-t-[3px] pb-[3px] ${tone}`}>
            <Icon />
            {badge && <Badge />}
          </div>
        ))}
      </div>
      <div className="ml-auto"><Tray /></div>
    </footer>
  );
}

export default function App() {
  return (
    <div className="flex h-[1080px] w-[1920px] flex-col overflow-hidden font-['Noto_Sans',sans-serif]">
      <TabStrip />
      <Toolbar />
      <Bookmarks />
      <Page />
      <Panel />
    </div>
  );
}
